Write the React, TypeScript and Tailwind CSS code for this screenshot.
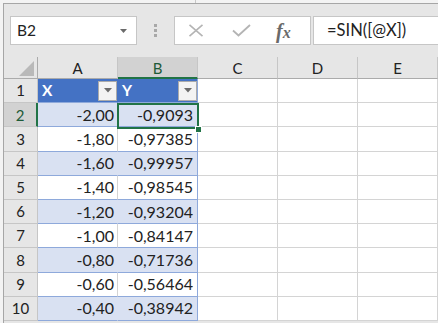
import React from "react";

const data: [string, string][] = [
  ["-2,00", "-0,9093"],
  ["-1,80", "-0,97385"],
  ["-1,60", "-0,99957"],
  ["-1,40", "-0,98545"],
  ["-1,20", "-0,93204"],
  ["-1,00", "-0,84147"],
  ["-0,80", "-0,71736"],
  ["-0,60", "-0,56464"],
  ["-0,40", "-0,38942"],
];

const cols = ["A", "B", "C", "D", "E"];

function FilterButton() {
  return (
    <div className="ml-auto flex h-[20px] w-[19px] items-center justify-center border border-[#ababab] bg-[#f3f3f3]">
      <svg width="8" height="5" viewBox="0 0 8 5">
        <path d="M0 0h8L4 4.5z" fill="#6b6b6b" />
      </svg>
    </div>
  );
}

function EmptyCells() {
  return (
    <>
      {[0, 1, 2].map((i) => (
        <div key={i} className="h-full w-[80px] shrink-0 border-b border-r border-[#d4d4d4] bg-white" />
      ))}
    </>
  );
}

export default function App() {
  return (
    <div className="h-[323px] w-[438px] overflow-hidden bg-[#f3f3f3] text-[#222]" style={{ fontFamily: "Lato, 'Open Sans', sans-serif" }}>
      <div className="relative h-[3px]">
        <div className="absolute left-[195px] top-0 h-[3px] w-px bg-[#c8c8c8]" />
      </div>
      <div className="ml-[3px] h-[320px] border-l border-t border-[#a6a6a6] bg-[#e6e6e6]">
        {/* formula bar */}
        <div className="flex items-center pt-[12px]">
          <div className="ml-[6px] flex h-[29px] w-[127px] items-center border border-[#c6c6c6] bg-white pl-[6px] pr-[9px]">
            <span className="text-[15.5px]">B2</span>
            <svg className="ml-auto" width="7" height="4" viewBox="0 0 7 4">
              <path d="M0 0h7L3.5 4z" fill="#6a6a6a" />
            </svg>
          </div>
          <div className="ml-[17px] flex flex-col gap-[2px]">
            <div className="h-[3px] w-[3px] bg-[#a8a8a8]" />
            <div className="h-[3px] w-[3px] bg-[#a8a8a8]" />
            <div className="h-[3px] w-[3px] bg-[#a8a8a8]" />
          </div>
          <div className="ml-[17px] flex h-[29px] w-[137px] items-center border border-[#c6c6c6] bg-white">
            <svg className="ml-[13px]" width="16" height="13" viewBox="0 0 16 13">
              <path d="M1.5 0.8L14.5 12.2M14.5 0.8L1.5 12.2" stroke="#b4b4b4" strokeWidth="1.6" />
            </svg>
            <svg className="ml-[28px]" width="19" height="13" viewBox="0 0 19 13">
              <path d="M1 6.5L6.5 11.5L18 1" stroke="#b4b4b4" strokeWidth="1.8" fill="none" />
            </svg>
            <span
              className="ml-[25px] text-[20px] font-bold italic leading-none text-[#6a6a6a]"
              style={{ fontFamily: "'Liberation Serif', serif" }}
            >
              f<span className="text-[16px]">x</span>
            </span>
          </div>
          <div className="ml-[2px] flex h-[29px] flex-1 items-center border border-r-0 border-[#c6c6c6] bg-white pl-[13px]">
            <span className="text-[16.5px]">=SIN([@X])</span>
          </div>
        </div>

        {/* grid */}
        <div className="relative mt-[12px]">
          <div className="flex h-[22px]">
            <div className="relative h-full w-[34px] shrink-0 border-b border-r border-[#ababab] bg-[#e6e6e6]">
              <svg className="absolute bottom-[2px] right-[3px]" width="15" height="15" viewBox="0 0 15 15">
                <path d="M15 0V15H0z" fill="#b9b9b9" />
              </svg>
            </div>
            {cols.map((c) => (
              <div
                key={c}
                className={
                  c === "B"
                    ? "flex h-full w-[80px] shrink-0 items-center justify-center border-b-2 border-r border-b-[#217346] border-r-[#c6c6c6] bg-[#d2d2d2] pt-[2px] text-[15px] text-[#1d5a38]"
                    : "flex h-full w-[80px] shrink-0 items-center justify-center border-b border-r border-b-[#ababab] border-r-[#c6c6c6] bg-[#e6e6e6] pt-[1px] text-[15px] text-[#222]"
                }
              >
                {c}
              </div>
            ))}
          </div>

          {/* table header row */}
          <div className="flex h-[24.2px]">
            <div className="flex h-full w-[34px] shrink-0 items-center justify-center border-b border-r border-[#c6c6c6] bg-[#e6e6e6] text-[15px]">
              1
            </div>
            <div className="flex h-full w-[80px] shrink-0 items-center border-b border-r border-b-[#8ea9db] border-r-[#4472c4] bg-[#4472c4] pl-[4px] text-[15.5px] font-bold text-white">
              X
              <FilterButton />
            </div>
            <div className="flex h-full w-[80px] shrink-0 items-center border-b border-r border-[#8ea9db] bg-[#4472c4] pl-[4px] text-[15.5px] font-bold text-white">
              Y
              <FilterButton />
            </div>
            <EmptyCells />
          </div>

          {data.map(([x, y], i) => {
            const banded = i % 2 === 0;
            const selected = i === 0;
            return (
              <div key={i} className="flex h-[24.2px]">
                <div
                  className={
                    selected
                      ? "flex h-full w-[34px] shrink-0 items-center justify-center border-b border-r-2 border-b-[#c6c6c6] border-r-[#217346] bg-[#d2d2d2] text-[15px] text-[#1d5a38]"
                      : "flex h-full w-[34px] shrink-0 items-center justify-center border-b border-r border-[#c6c6c6] bg-[#e6e6e6] text-[15px]"
                  }
                >
                  {i + 2}
                </div>
                <div
                  className={
                    banded
                      ? "flex h-full w-[80px] shrink-0 items-center justify-end border-b border-r border-b-[#8ea9db] border-r-[#d9e1f2] bg-[#d9e1f2] pr-[3px] text-[16px]"
                      : "flex h-full w-[80px] shrink-0 items-center justify-end border-b border-r border-b-[#8ea9db] border-r-[#d4d4d4] bg-white pr-[3px] text-[16px]"
                  }
                >
                  {x}
                </div>
                <div
                  className={
                    banded
                      ? "flex h-full w-[80px] shrink-0 items-center justify-end border-b border-r border-[#8ea9db] bg-[#d9e1f2] pr-[4px] text-[16px]"
                      : "flex h-full w-[80px] shrink-0 items-center justify-end border-b border-r border-[#8ea9db] bg-white pr-[4px] text-[16px]"
                  }
                >
                  {y}
                </div>
                <EmptyCells />
              </div>
            );
          })}

          {/* selection */}
          <div className="absolute left-[113px] top-[46px] h-[26px] w-[82px] border-2 border-[#217346]" />
          <div className="absolute left-[191px] top-[69px] h-[7px] w-[7px] border border-white bg-[#217346]" />
        </div>
      </div>
    </div>
  );
}
